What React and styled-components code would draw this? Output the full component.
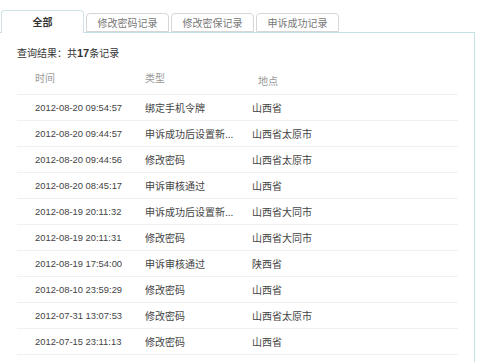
import React from "react";
import styled, { createGlobalStyle } from "styled-components";

const GlobalStyle = createGlobalStyle`
  html, body {
    margin: 0;
    padding: 0;
    background: #fff;
  }
  body {
    font-family: "Noto Sans CJK SC", "Liberation Sans", sans-serif;
    font-size: 10px;
    color: #333;
  }
`;

const Wrap = styled.div`
  width: 474px;
  padding: 10px 0 0 1px;
  overflow: hidden;
  height: 352px;
`;

const Tabs = styled.ul`
  list-style: none;
  margin: 0 0 -1px;
  padding: 0;
  display: flex;
  align-items: flex-end;
  gap: 2px;
  position: relative;
  z-index: 1;
`;

const Tab = styled.li`
  box-sizing: border-box;
  width: 83px;
  height: ${(p) => (p.$active ? "23px" : "19px")};
  display: flex;
  align-items: center;
  justify-content: center;
  padding-bottom: ${(p) => (p.$active ? "1px" : "0")};
  margin-bottom: ${(p) => (p.$active ? "0" : "1px")};
  border: 1px solid ${(p) => (p.$active ? "#cfe3e8" : "#d6d6d6")};
  border-bottom: ${(p) => (p.$active ? "none" : "1px solid #d6d6d6")};
  border-radius: 4px 4px 0 0;
  background: #fff;
  color: ${(p) => (p.$active ? "#333" : "#777")};
  font-weight: ${(p) => (p.$active ? "bold" : "normal")};
  font-size: 10px;
  line-height: 1;
`;

const Panel = styled.div`
  box-sizing: border-box;
  margin-left: -1px;
  width: 475px;
  height: 340px;
  border: 1px solid #c4dfe5;
  border-left: none;
  border-bottom: none;
  padding: 12px 16px 0 17px;
`;

const Summary = styled.div`
  font-size: 10px;
  color: #333;
  line-height: 16px;
  height: 16px;

  b {
    font-family: "Liberation Sans", sans-serif;
    font-size: 11px;
  }
`;

const Table = styled.div`
  margin-top: 9px;
  width: 441px;
`;

const Row = styled.div`
  display: grid;
  grid-template-columns: 110px 107px 1fr;
  align-items: ${(p) => (p.$head ? "start" : "center")};
  line-height: 16px;
  height: ${(p) => (p.$head ? "24px" : "25px")};
  border-bottom: 1px solid #f0f0f0;
  padding-left: 18px;
  color: ${(p) => (p.$head ? "#999" : "#444")};
`;

const Cell = styled.div`
  font-size: 10px;
  white-space: nowrap;
  padding-left: ${(p) => p.$pad || 0}px;
  margin-top: ${(p) => p.$drop || 0}px;
`;

const DateCell = styled.div`
  font-family: "Liberation Sans", sans-serif;
  font-size: 9.4px;
  color: #444;
  white-space: nowrap;
`;

const records = [
  ["2012-08-20 09:54:57", "绑定手机令牌", "山西省"],
  ["2012-08-20 09:44:57", "申诉成功后设置新...", "山西省太原市"],
  ["2012-08-20 09:44:56", "修改密码", "山西省太原市"],
  ["2012-08-20 08:45:17", "申诉审核通过", "山西省"],
  ["2012-08-19 20:11:32", "申诉成功后设置新...", "山西省大同市"],
  ["2012-08-19 20:11:31", "修改密码", "山西省大同市"],
  ["2012-08-19 17:54:00", "申诉审核通过", "陕西省"],
  ["2012-08-10 23:59:29", "修改密码", "山西省"],
  ["2012-07-31 13:07:53", "修改密码", "山西省太原市"],
  ["2012-07-15 23:11:13", "修改密码", "山西省"],
];

const tabs = ["全部", "修改密码记录", "修改密保记录", "申诉成功记录"];

export default function App() {
  return (
    <>
      <GlobalStyle />
      <Wrap>
        <Tabs>
          {tabs.map((t, i) => (
            <Tab key={t} $active={i === 0}>
              {t}
            </Tab>
          ))}
        </Tabs>
        <Panel>
          <Summary>
            查询结果：共<b>17</b>条记录
          </Summary>
          <Table>
            <Row $head>
              <Cell>时间</Cell>
              <Cell>类型</Cell>
              <Cell $pad={6} $drop={3}>地点</Cell>
            </Row>
            {records.map((r, i) => (
              <Row key={i}>
                <DateCell>{r[0]}</DateCell>
                <Cell>{r[1]}</Cell>
                <Cell>{r[2]}</Cell>
              </Row>
            ))}
          </Table>
        </Panel>
      </Wrap>
    </>
  );
}
